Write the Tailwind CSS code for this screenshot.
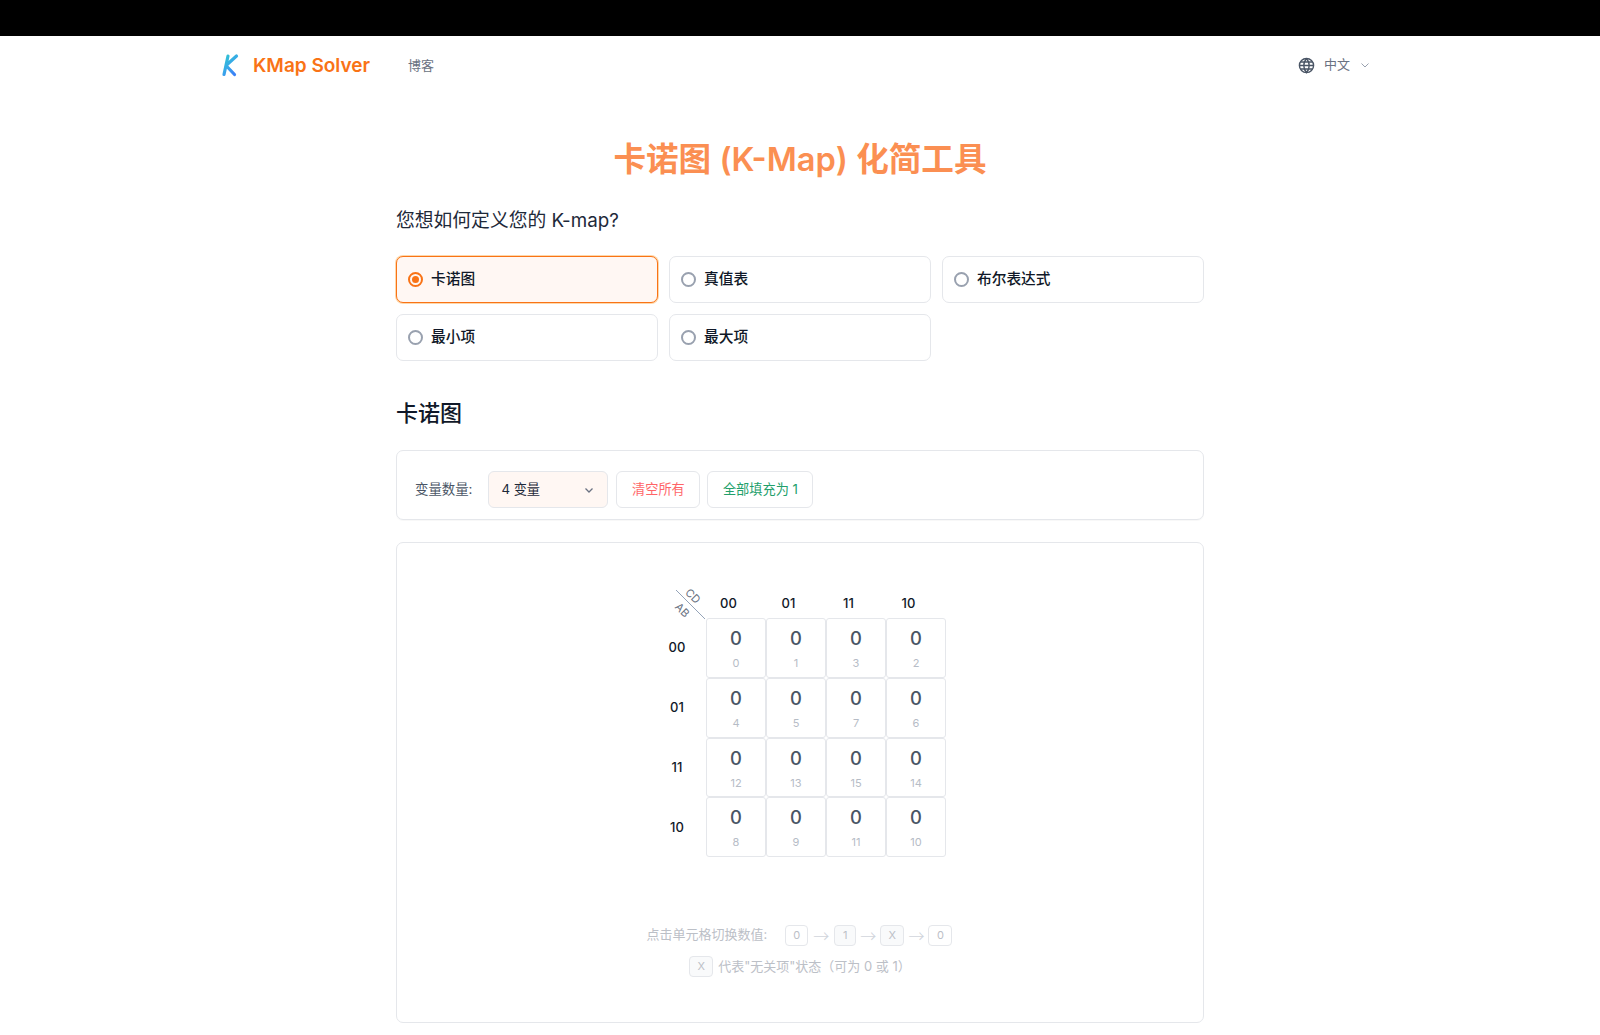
<!DOCTYPE html>
<html lang="zh-CN">
<head>
    <meta charset="UTF-8">
    <title>KMap Solver</title>
    <script src="https://cdn.jsdelivr.net/npm/@tailwindcss/browser@4"></script>
</head>
<body class="bg-white h-[1035px] overflow-hidden font-['Inter','Noto_Sans_CJK_SC',sans-serif] text-gray-900">
    <div class="h-9 bg-black"></div>

    <!-- Navbar -->
    <header class="w-[1150px] ml-[221px] h-[58px] flex items-center">
        <svg class="w-[20px] h-[24px] ml-[-1px]" viewBox="0 0 20 24" fill="none">
            <defs>
                <linearGradient id="kg" x1="0" y1="0" x2="0.7" y2="1">
                    <stop offset="0" stop-color="#2fc4d0"/>
                    <stop offset="0.55" stop-color="#38a9e8"/>
                    <stop offset="1" stop-color="#3b82f6"/>
                </linearGradient>
            </defs>
            <path d="M8 3 L4 21.5 M16.5 3 L6 12.5 L14.5 21.5" stroke="url(#kg)" stroke-width="3.2" stroke-linecap="round" stroke-linejoin="round"/>
        </svg>
        <span class="ml-[13px] mt-[2px] text-[19px] font-semibold text-[#f97316]">KMap Solver</span>
        <a class="ml-[38px] mt-[2px] text-[13px] text-gray-500">博客</a>
        <div class="ml-auto flex items-center text-gray-500">
            <svg class="w-[17px] h-[17px] text-gray-600" viewBox="0 0 24 24" fill="none" stroke="currentColor" stroke-width="2">
                <circle cx="12" cy="12" r="10"/>
                <path d="M2 12h20M12 2a15 15 0 0 1 0 20a15 15 0 0 1 0-20M3.5 7h17M3.5 17h17"/>
            </svg>
            <span class="ml-[9px] text-[13px]">中文</span>
            <svg class="ml-[9px] w-[12px] h-[12px] text-gray-400" viewBox="0 0 24 24" fill="none" stroke="currentColor" stroke-width="2"><path d="M5 9l7 7 7-7"/></svg>
        </div>
    </header>

    <main class="w-[808px] mx-auto">
        <h1 class="mt-[40px] text-center text-[32.6px] leading-[50px] font-semibold text-[#fb8f52]">卡诺图 (K-Map) 化简工具</h1>
        <h2 class="mt-[23px] text-[18.8px] leading-[28px] font-normal text-gray-800">您想如何定义您的 K-map?</h2>

        <!-- 输入方式 -->
        <div class="mt-[21px] grid grid-cols-3 gap-x-[11px] gap-y-[11px]">
            <label class="h-[47px] px-[11px] flex items-center rounded-[7px] border border-[#f97316] bg-[#fff7f3] shadow-[0_0_0_1px_#fed7aa]">
                <span class="w-[15px] h-[15px] rounded-full border-2 border-[#f97316] flex items-center justify-center"><span class="w-[7px] h-[7px] rounded-full bg-[#f97316]"></span></span>
                <span class="ml-[8px] text-[14.7px] font-medium">卡诺图</span>
            </label>
            <label class="h-[47px] px-[11px] flex items-center rounded-[7px] border border-gray-200">
                <span class="w-[15px] h-[15px] rounded-full border-2 border-gray-400"></span>
                <span class="ml-[8px] text-[14.7px] font-medium">真值表</span>
            </label>
            <label class="h-[47px] px-[11px] flex items-center rounded-[7px] border border-gray-200">
                <span class="w-[15px] h-[15px] rounded-full border-2 border-gray-400"></span>
                <span class="ml-[8px] text-[14.7px] font-medium">布尔表达式</span>
            </label>
            <label class="h-[47px] px-[11px] flex items-center rounded-[7px] border border-gray-200">
                <span class="w-[15px] h-[15px] rounded-full border-2 border-gray-400"></span>
                <span class="ml-[8px] text-[14.7px] font-medium">最小项</span>
            </label>
            <label class="h-[47px] px-[11px] flex items-center rounded-[7px] border border-gray-200">
                <span class="w-[15px] h-[15px] rounded-full border-2 border-gray-400"></span>
                <span class="ml-[8px] text-[14.7px] font-medium">最大项</span>
            </label>
        </div>

        <h2 class="mt-[36px] text-[22px] leading-[33px] font-medium text-gray-900">卡诺图</h2>

        <!-- 工具栏 -->
        <div class="mt-[20px] h-[70px] px-[18px] pt-[9px] flex items-center rounded-[7px] border border-gray-200 shadow-[0_1px_1px_rgba(0,0,0,0.03)]">
            <span class="text-[13.4px] text-gray-600">变量数量:</span>
            <div class="ml-[16px] w-[120px] h-[37px] px-[12px] flex items-center justify-between rounded-[6px] border border-gray-200 bg-[#fff7f3] text-[13.2px] text-gray-800">
                <span>4 变量</span>
                <svg class="w-[12px] h-[12px] text-gray-500" viewBox="0 0 24 24" fill="none" stroke="currentColor" stroke-width="2.5"><path d="M5 9l7 7 7-7"/></svg>
            </div>
            <button class="ml-[8px] w-[84px] h-[37px] rounded-[6px] border border-gray-200 text-[13.2px] text-red-400">清空所有</button>
            <button class="ml-[7px] w-[106px] h-[37px] rounded-[6px] border border-gray-200 text-[13.2px] text-[#22a06b]">全部填充为 1</button>
        </div>

        <!-- 卡诺图卡片 -->
        <div class="mt-[22px] h-[481px] flex flex-col items-center rounded-[7px] border border-gray-200">
            <div id="kmap" class="relative mt-[45px] mr-[8px] w-[300px] grid grid-cols-[60px_repeat(4,60px)]"></div>

            <div class="mt-[66px] mr-[1px] flex items-center text-[13px] text-[#bcc0c7]">
                <span>点击单元格切换数值:</span>
                <kbd class="ml-[18px] w-[23px] h-[21px] flex items-center justify-center rounded-[4px] border border-gray-200 text-[11px] font-['Inter']">0</kbd>
                <span class="mx-[5px] text-[16px] font-light text-gray-300 font-['Noto_Sans_CJK_SC']">→</span>
                <kbd class="w-[22px] h-[21px] flex items-center justify-center rounded-[4px] border border-gray-200 bg-gray-50 text-[11px] font-['Inter']">1</kbd>
                <span class="mx-[4px] text-[16px] font-light text-gray-300 font-['Noto_Sans_CJK_SC']">→</span>
                <kbd class="w-[24px] h-[21px] flex items-center justify-center rounded-[4px] border border-gray-200 bg-gray-50 text-[11px] font-['Inter']">X</kbd>
                <span class="mx-[4px] text-[16px] font-light text-gray-300 font-['Noto_Sans_CJK_SC']">→</span>
                <kbd class="w-[24px] h-[21px] flex items-center justify-center rounded-[4px] border border-gray-200 text-[11px] font-['Inter']">0</kbd>
            </div>
            <div class="mt-[9px] flex items-center text-[13px] text-[#bcc0c7]">
                <kbd class="w-[24px] h-[21px] flex items-center justify-center rounded-[4px] border border-gray-200 bg-gray-50 text-[11px] font-['Inter']">X</kbd>
                <span class="ml-[5px]">代表"无关项"状态（可为 0 或 1）</span>
            </div>
        </div>
    </main>

    <script>
        const codes = ['00', '01', '11', '10'];
        const indices = [[0, 1, 3, 2], [4, 5, 7, 6], [12, 13, 15, 14], [8, 9, 11, 10]];
        let html = `
            <div class="h-[30px]"></div>
            <svg class="absolute left-[29px] top-[1px] w-[32px] h-[32px]" viewBox="0 0 32 32"><path d="M1 1 L30 30" stroke="#94a3b8" stroke-width="1"/></svg>
            <span class="absolute left-[39px] top-[1px] leading-[14px] rotate-45 text-[11px] text-gray-500">CD</span>
            <span class="absolute left-[29px] top-[15px] leading-[14px] rotate-45 text-[11px] text-gray-500">AB</span>`;
        codes.forEach(c => {
            html += `<div class="h-[30px] pr-[15px] pt-[2px] flex items-center justify-center text-[13px] font-medium text-gray-900">${c}</div>`;
        });
        indices.forEach((row, r) => {
            html += `<div class="h-[59.8px] pl-[2px] flex items-center justify-center text-[13px] font-medium text-gray-900">${codes[r]}</div>`;
            row.forEach(n => {
                html += `<div class="h-[59.8px] flex flex-col items-center rounded-[3px] border border-gray-200">
                    <span class="mt-[7px] leading-[24px] text-[18.4px] font-medium text-gray-600">0</span>
                    <span class="mt-[5px] leading-[16px] text-[11px] text-[#b6bcc6]">${n}</span>
                </div>`;
            });
        });
        document.getElementById('kmap').innerHTML = html;
    </script>
</body>
</html>
